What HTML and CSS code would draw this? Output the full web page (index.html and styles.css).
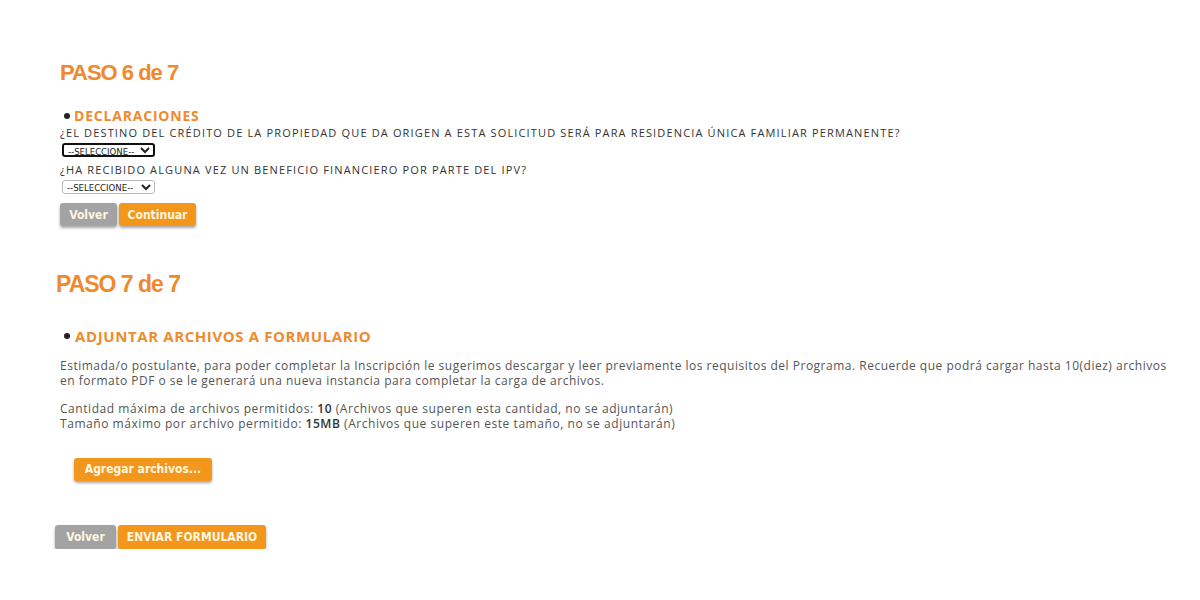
FILE: index.html
```html
<!DOCTYPE html>
<html lang="es">
<head>
<meta charset="utf-8">
<title>Formulario</title>
<link rel="stylesheet" href="styles.css">
</head>
<body>
<div class="page">
  <section class="step step6">
    <h2 class="step-title">PASO 6 de 7</h2>
    <h3 class="sec-title"><span class="dot"></span>DECLARACIONES</h3>
    <p class="q">¿EL DESTINO DEL CRÉDITO DE LA PROPIEDAD QUE DA ORIGEN A ESTA SOLICITUD SERÁ PARA RESIDENCIA ÚNICA FAMILIAR PERMANENTE?</p>
    <select class="sel sel-focus"><option>--SELECCIONE--</option></select>
    <p class="q">¿HA RECIBIDO ALGUNA VEZ UN BENEFICIO FINANCIERO POR PARTE DEL IPV?</p>
    <select class="sel"><option>--SELECCIONE--</option></select>
    <div class="actions">
      <button class="btn btn-gray">Volver</button>
      <button class="btn btn-orange btn-cont">Continuar</button>
    </div>
  </section>

  <section class="step step7">
    <h2 class="step-title big">PASO 7 de 7</h2>
    <h3 class="sec-title big"><span class="dot"></span>ADJUNTAR ARCHIVOS A FORMULARIO</h3>
    <p class="txt">Estimada/o postulante, para poder completar la Inscripción le sugerimos descargar y leer previamente los requisitos del Programa. Recuerde que podrá cargar hasta 10(diez) archivos en formato PDF o se le generará una nueva instancia para completar la carga de archivos.</p>
    <p class="txt limits">Cantidad máxima de archivos permitidos: <b>10</b> (Archivos que superen esta cantidad, no se adjuntarán)<br>Tamaño máximo por archivo permitido: <b>15MB</b> (Archivos que superen este tamaño, no se adjuntarán)</p>
    <div class="upload">
      <button class="btn btn-orange btn-add">Agregar archivos...</button>
    </div>
    <div class="actions final">
      <button class="btn btn-gray">Volver</button>
      <button class="btn btn-orange">ENVIAR FORMULARIO</button>
    </div>
  </section>
</div>
</body>
</html>
```
FILE: styles.css
```css
* { box-sizing: border-box; }
html, body { margin: 0; padding: 0; background: #fff; }
body { font-family: "Open Sans", "Liberation Sans", sans-serif; color: #444; }

.page { padding: 0 0 0 60px; }

.step { display: flex; flex-direction: column; align-items: flex-start; }
.step6 { padding-top: 60px; }
.step7 { padding-top: 45px; }

.step-title {
  margin: 0;
  font-family: "Liberation Sans", Arial, sans-serif;
  font-weight: bold;
  font-size: 22px;
  line-height: 26px;
  letter-spacing: -1px;
  color: #f0892d;
}
.step-title.big { font-size: 23px; margin-left: -4px; }

.sec-title {
  margin: 22px 0 0 4px;
  display: flex;
  align-items: center;
  font-family: "Open Sans", sans-serif;
  font-weight: bold;
  font-size: 14px;
  line-height: 16px;
  letter-spacing: 0.8px;
  color: #ef8a2e;
}
.sec-title.big { margin-top: 31px; margin-left: 4px; font-size: 15px; letter-spacing: 0.6px; }
.dot {
  width: 6px; height: 6px; border-radius: 50%;
  background: #222; margin-right: 4px;
}
.sec-title.big .dot { margin-right: 5px; }

.q {
  margin: 2px 0 0;
  font-size: 11px;
  line-height: 14px;
  letter-spacing: 1.15px;
  color: #333;
}
.sel + .q { margin-top: 6px; }

.sel {
  margin: 3px 0 0 2px;
  width: 93px;
  height: 14px;
  padding: 0;
  font-family: "DejaVu Sans Condensed", sans-serif;
  font-size: 9.5px;
  color: #222;
  border: 1px solid #bbb;
  border-radius: 3px;
  background: #fff;
}
.sel-focus { border: 2px solid #111; }

.actions { display: flex; gap: 2px; margin-top: 9px; }
.actions.final { margin-left: -5px; margin-top: 44px; }

.btn {
  height: 23px;
  padding: 0 10px;
  border: none;
  border-radius: 3px;
  font-family: "DejaVu Sans Condensed", "DejaVu Sans", sans-serif;
  font-weight: bold;
  font-size: 12px;
  color: #fff6e0;
  box-shadow: 0 2px 3px rgba(0,0,0,0.35);
}
.btn-gray { background: #a3a3a3; width: 57px; padding: 0; }
.btn-orange { background: #f2971c; }
.btn-cont { width: 77px; padding: 0; }
.final .btn-gray { width: 61px; height: 24px; }
.final .btn-orange { height: 24px; width: 148px; padding: 0; }

.txt {
  margin: 14px 0 0;
  max-width: 1120px;
  font-size: 12px;
  line-height: 15px;
  letter-spacing: 0.5px;
  color: #555;
}
.txt b { font-weight: 600; color: #333; }
.limits { line-height: 15px; margin-top: 13px; letter-spacing: 0.55px; }

.upload { margin: 25px 0 0 14px; }
.btn-add { width: 138px; height: 23px; padding: 0; }
```
